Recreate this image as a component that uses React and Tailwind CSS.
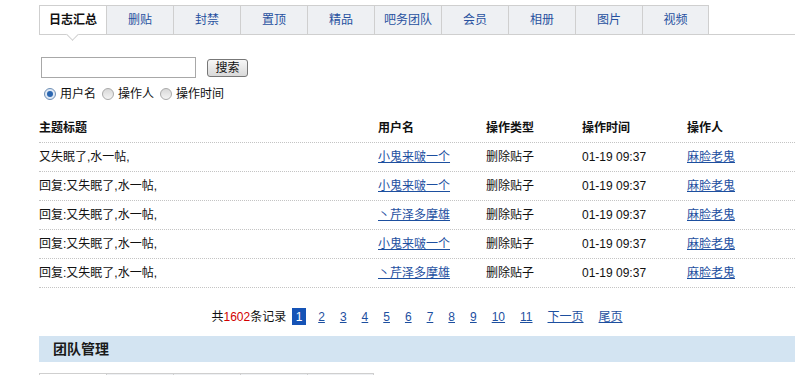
import React from "react";

const tabs = ["日志汇总", "删贴", "封禁", "置顶", "精品", "吧务团队", "会员", "相册", "图片", "视频"];

const rows = [
  { t: "又失眠了,水一帖,", u: "小鬼来啵一个" },
  { t: "回复:又失眠了,水一帖,", u: "小鬼来啵一个" },
  { t: "回复:又失眠了,水一帖,", u: "丶芹泽多摩雄" },
  { t: "回复:又失眠了,水一帖,", u: "小鬼来啵一个" },
  { t: "回复:又失眠了,水一帖,", u: "丶芹泽多摩雄" },
];

function Radio({ checked, label }) {
  return (
    <span className="flex items-center gap-[4px]">
      <span
        className={
          checked
            ? "w-[12px] h-[12px] rounded-full border border-[#6f8fb5] bg-[#dfe9f5] flex items-center justify-center"
            : "w-[12px] h-[12px] rounded-full border border-[#a9a9a9] bg-gradient-to-b from-[#d8d8d8] to-[#f4f4f4]"
        }
      >
        {checked && <span className="w-[6px] h-[6px] rounded-full bg-[#2a66b0]" />}
      </span>
      <span>{label}</span>
    </span>
  );
}

export default function App() {
  const cols = "grid grid-cols-[339px_108px_96px_105px_108px] items-center";
  return (
    <div className="w-[803px] h-[375px] overflow-hidden bg-white text-[12px] text-[#111] font-['Liberation_Sans','Noto_Sans_CJK_SC',sans-serif]">
      <div className="ml-[39px] w-[756px] pt-[5px]">
        {/* tabs */}
        <div className="flex border-b border-[#cfcfcf] h-[30px]">
          {tabs.map((t, i) => (
            <div
              key={t}
              className={
                (i === 0
                  ? "relative bg-white font-bold text-[#111] "
                  : "bg-[#eef0f3] text-[#27509f] ") +
                "w-[67px] h-[29px] border-t border-l border-[#cfcfcf] flex items-center justify-center leading-none " +
                (i === tabs.length - 1 ? "border-r" : "")
              }
            >
              {t}
              {i === 0 && (
                <span className="absolute left-[28px] bottom-[-5px] w-[9px] h-[9px] rotate-45 bg-white border-r border-b border-[#cfcfcf]" />
              )}
            </div>
          ))}
        </div>

        {/* search */}
        <div className="mt-[22px] flex items-center">
          <input className="ml-[2px] w-[155px] h-[21px] border border-[#a8a8a8] outline-none" />
          <button className="ml-[11px] w-[41px] h-[18px] border border-[#777] rounded-[3px] bg-gradient-to-b from-[#f7f7f7] to-[#d9d9d9] text-[12px] leading-none text-[#111]">
            搜索
          </button>
        </div>
        <div className="mt-[8px] ml-[5px] flex items-center gap-[6px] h-[15px]">
          <Radio checked label="用户名" />
          <Radio label="操作人" />
          <Radio label="操作时间" />
        </div>

        {/* table */}
        <div className="mt-[13px]">
          <div className={cols + " h-[29px] border-b border-dotted border-[#c4c4c4] font-bold"}>
            <div>主题标题</div>
            <div>用户名</div>
            <div>操作类型</div>
            <div>操作时间</div>
            <div>操作人</div>
          </div>
          {rows.map((r, i) => (
            <div key={i} className={cols + " h-[29px] border-b border-dotted border-[#c4c4c4]"}>
              <div>{r.t}</div>
              <div>
                <a href="#" className="text-[#1d4f9f] underline">{r.u}</a>
              </div>
              <div>删除贴子</div>
              <div>01-19 09:37</div>
              <div>
                <a href="#" className="text-[#1d4f9f] underline">麻脸老鬼</a>
              </div>
            </div>
          ))}
        </div>

        {/* pagination */}
        <div className="mt-[20px] flex justify-center items-center h-[17px]">
          <span className="mr-[6px]">
            共<span className="text-[#d20000]">1602</span>条记录
          </span>
          <span className="w-[14px] h-[17px] bg-[#1553b6] text-white flex items-center justify-center mr-[12px]">1</span>
          {["2", "3", "4", "5", "6", "7", "8", "9", "10", "11", "下一页", "尾页"].map((p) => (
            <a key={p} href="#" className="text-[#1d4f9f] underline mr-[15px] last:mr-0">
              {p}
            </a>
          ))}
        </div>

        {/* section header */}
        <div className="mt-[11px] h-[26px] bg-[#d3e4f2] flex items-center pl-[14px] text-[14px] font-bold text-[#1a1a1a]">
          团队管理
        </div>

        <div className="mt-[11px] flex">
          {[0, 1, 2, 3, 4].map((i) => (
            <div
              key={i}
              className={
                (i === 0 ? "bg-white " : "bg-[#eef0f3] ") +
                "w-[67px] h-[29px] border-t border-l border-[#cfcfcf] " +
                (i === 4 ? "border-r" : "")
              }
            />
          ))}
        </div>
      </div>
    </div>
  );
}
